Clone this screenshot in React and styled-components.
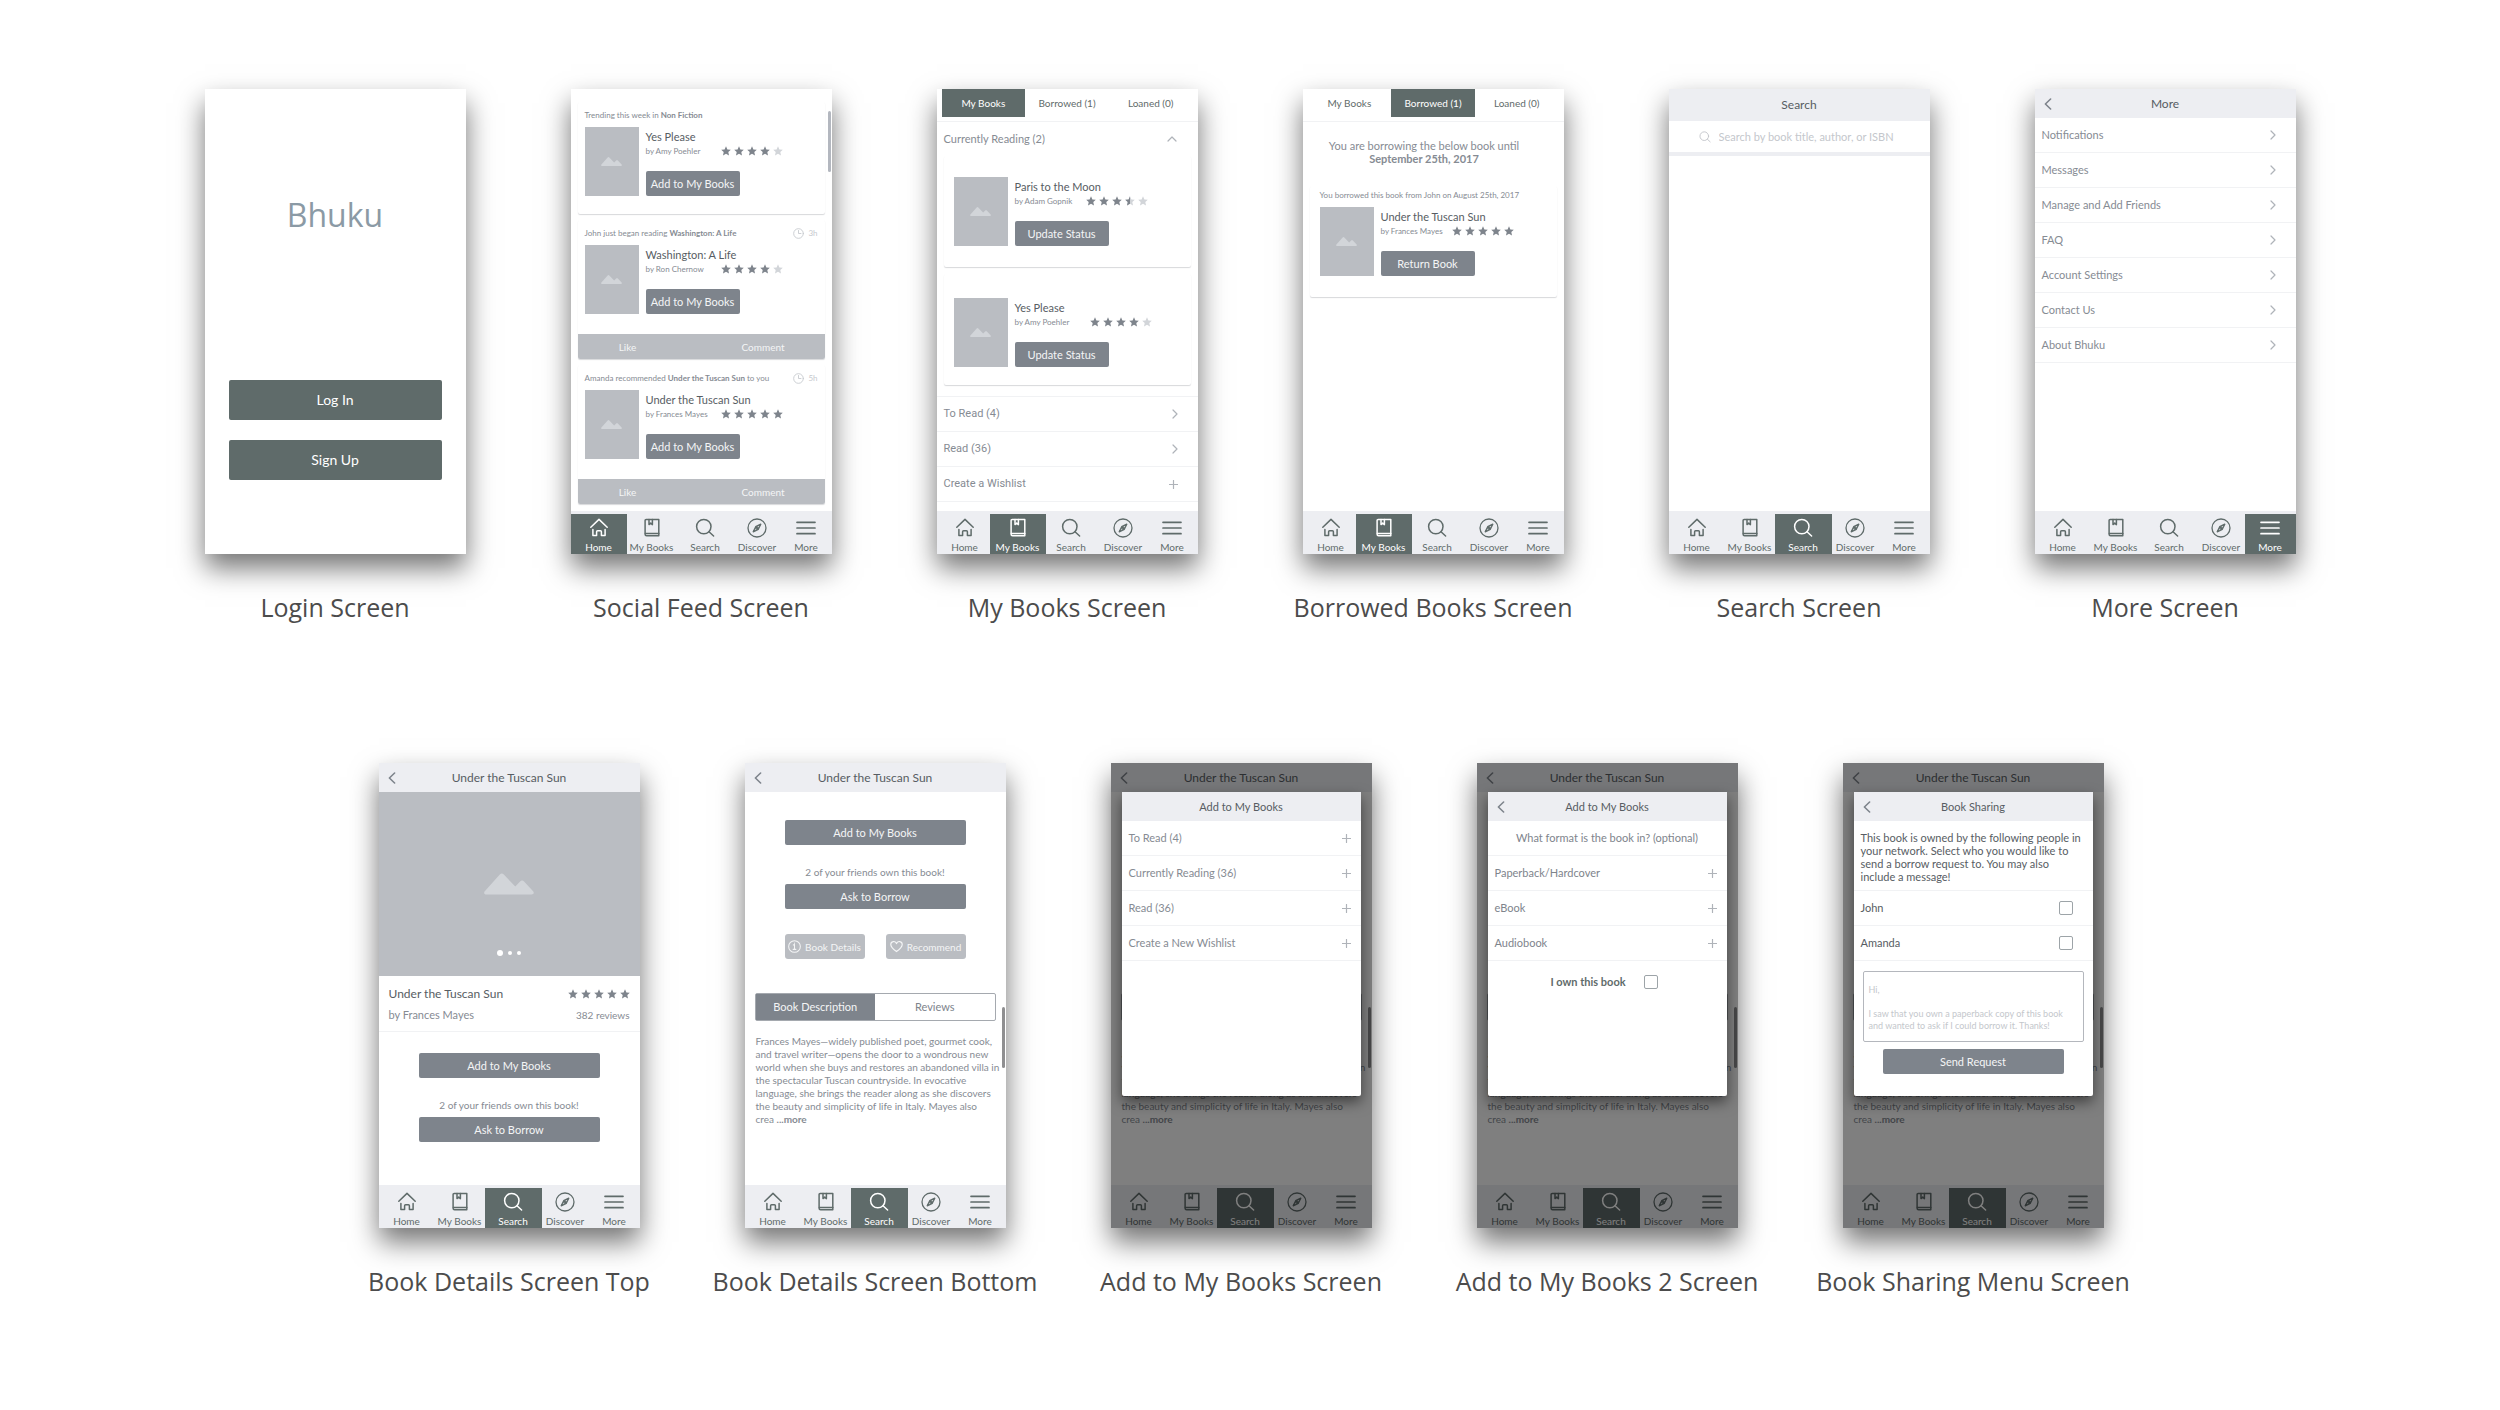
import React from "react";
import styled, { createGlobalStyle, css } from "styled-components";

const colors = {
   dark: "#5f6b6a",
   slate: "#7e848c",
   silver: "#babdc2",
   pale: "#d2d5d9",
   bar: "#edeef2",
   line: "#f1f2f4",
   title: "#575d63",
   text: "#868b93"
};

const GlobalStyle = createGlobalStyle`
   *, *::before, *::after {
      box-sizing: border-box;
   }

   body {
      margin: 0;
      background: #fff;
      font-family: Lato, "Open Sans", sans-serif;
      font-size: 11px;
      line-height: 14px;
      color: ${colors.text};
   }

   button, input, textarea {
      font: inherit;
      color: inherit;
      margin: 0;
      padding: 0;
      border: 0;
      background: none;
   }

   button {
      cursor: pointer;
   }

   h1, h2, h3, p, figure, ul {
      margin: 0;
      padding: 0;
      font-weight: 400;
   }

   svg {
      display: block;
      flex: none;
   }
`;

/* ---------- Board ---------- */

const Board = styled.main`
   display: flex;
   flex-direction: column;
   gap: 140px;
   padding: 89px 40px 112px;
`;

const BoardRow = styled.section`
   display: flex;
   flex-wrap: wrap;
   justify-content: center;
   gap: 60px 105px;
   padding-right: ${({ $indent }) => ($indent ? "18px" : "0")};
`;

const Frame = styled.figure`
   display: flex;
   flex-direction: column;
   align-items: center;
   gap: 37px;
   width: 261px;
`;

const Caption = styled.figcaption`
   font-family: "Open Sans", sans-serif;
   font-size: 25px;
   line-height: 32px;
   color: #4c4c4c;
   white-space: nowrap;
`;

const Phone = styled.div`
   position: relative;
   display: flex;
   flex-direction: column;
   width: 100%;
   min-height: 465px;
   background: #fff;
   box-shadow: 0 14px 26px rgba(0, 0, 0, 0.55);
`;

const Content = styled.div`
   display: flex;
   flex-direction: column;
   flex: 1;
`;

const ScrollThumb = styled.div`
   position: absolute;
   top: ${({ $low }) => ($low ? "244px" : "22px")};
   right: 1px;
   width: 3px;
   height: 61px;
   border-radius: 2px;
   background: ${({ $low }) => ($low ? "#8f8f91" : "#b3b7bf")};
`;

/* ---------- Icons ---------- */

const Stroke = ({ size = 20, width = size, height = size, weight = 1.5, viewBox = "0 0 20 20", children }) => (
   <svg
      width={width}
      height={height}
      viewBox={viewBox}
      fill="none"
      stroke="currentColor"
      strokeWidth={weight}
      strokeLinecap="round"
      strokeLinejoin="round"
      aria-hidden="true"
   >
      {children}
   </svg>
);

const HomeIcon = () => (
   <Stroke>
      <path d="M1.8 9.2 10 1.4l8.2 7.8" />
      <path d="M3.9 11.6v6h3.7v-3.8a1 1 0 0 1 1-1h2.8a1 1 0 0 1 1 1v3.8h3.7v-6" />
   </Stroke>
);

const BookIcon = () => (
   <Stroke>
      <path d="M4.2 1.4h12.6v16.4H4.6a1.5 1.5 0 0 1-1.5-1.5V2.5a1.1 1.1 0 0 1 1.1-1.1z" />
      <path d="M3.4 15.4h13.4M7 1.6v5l1.7-1.5 1.7 1.5v-5" />
   </Stroke>
);

const SearchIcon = ({ size = 20, weight }) => (
   <Stroke size={size} weight={weight}>
      <circle cx="8.8" cy="8.6" r="7.2" />
      <path d="m14 13.8 4.6 4.2" />
   </Stroke>
);

const DiscoverIcon = () => (
   <Stroke weight={1.3}>
      <circle cx="10" cy="10" r="9" />
      <path d="M13.8 6.2 11.3 11.3 6.2 13.8l2.5-5.1zM8.7 8.7l2.6 2.6" />
      <circle cx="10" cy="10" r="1.2" />
   </Stroke>
);

const MenuIcon = () => (
   <Stroke weight={1.7}>
      <path d="M1 4.3h18M1 10h18M1 15.7h18" />
   </Stroke>
);

const BackIcon = () => (
   <Stroke width={8} height={12} viewBox="0 0 8 12" weight={1.6}>
      <path d="M6.6 1 1.4 6l5.2 5" />
   </Stroke>
);

const RowIcons = {
   chevron: (
      <Stroke width={6} height={10} viewBox="0 0 6 10" weight={1.2}>
         <path d="m1 1 4 4-4 4" />
      </Stroke>
   ),
   up: (
      <Stroke width={10} height={6} viewBox="0 0 10 6" weight={1.2}>
         <path d="m1 5 4-4 4 4" />
      </Stroke>
   ),
   plus: (
      <Stroke width={9} height={9} viewBox="0 0 9 9" weight={1.2}>
         <path d="M4.5.5v8M.5 4.5h8" />
      </Stroke>
   )
};

const ClockIcon = () => (
   <Stroke size={11} weight={1.6}>
      <circle cx="10" cy="10" r="8.8" />
      <path d="M10 4.5V10h4.5" />
   </Stroke>
);

const InfoIcon = () => (
   <Stroke size={13} weight={1.6}>
      <circle cx="10" cy="10" r="9" />
      <path d="M8.2 7.8 10 7v7.2M7.8 14.4h4.4M10 4.8v.2" />
   </Stroke>
);

const HeartIcon = () => (
   <Stroke size={13} weight={1.8}>
      <path d="M10 17.8C4.4 13.6 1.2 10.6 1.2 6.9a4.5 4.5 0 0 1 8.8-1.4 4.5 4.5 0 0 1 8.8 1.4c0 3.7-3.2 6.7-8.8 10.9z" />
   </Stroke>
);

const Mountains = ({ width = 21, height = 9 }) => (
   <svg width={width} height={height} viewBox="0 0 50 21" fill={colors.pale} aria-hidden="true">
      <path d="M2.5 21C0 21-.6 18.8 1 17.4L15.8 1q2-1.9 4 0l11.5 12 4.8-5q2-1.8 4 0l9 9.8c1.4 1.5.4 3.2-1.6 3.2z" />
   </svg>
);

/* ---------- Rating ---------- */

const Stars = styled.div`
   display: flex;
   gap: 3px;
`;

const STAR = "M5 .3l1.4 3.1 3.4.4-2.5 2.3.7 3.4L5 7.8 2 9.5l.7-3.4L.2 3.8l3.4-.4z";
const HALF_STAR = "M5 .3v7.5L2 9.5l.7-3.4L.2 3.8l3.4-.4z";

const Rating = ({ value }) => (
   <Stars role="img" aria-label={`${value} out of 5 stars`}>
      {[1, 2, 3, 4, 5].map(n => (
         <svg key={n} width="10" height="10" viewBox="0 0 10 10">
            <path d={STAR} fill={value >= n ? colors.slate : colors.pale} />
            {value > n - 1 && value < n && <path d={HALF_STAR} fill={colors.slate} />}
         </svg>
      ))}
   </Stars>
);

/* ---------- Bottom navigation ---------- */

const NavBar = styled.nav`
   display: grid;
   grid-template-columns: 56fr 50fr 57fr 47fr 51fr;
   padding-top: 3px;
   background: ${colors.bar};
`;

const NavButton = styled.button`
   display: flex;
   flex-direction: column;
   align-items: center;
   gap: 3px;
   height: 40px;
   margin: 0 ${({ $wide }) => ($wide ? "-3px" : "0")};
   padding-top: 4px;
   font-size: 10px;
   line-height: 12px;
   white-space: nowrap;
   color: ${({ $active }) => ($active ? "#fff" : colors.dark)};
   background: ${({ $active }) => ($active ? colors.dark : "transparent")};
`;

const navItems = [
   { label: "Home", Icon: HomeIcon },
   { label: "My Books", Icon: BookIcon, wide: true },
   { label: "Search", Icon: SearchIcon },
   { label: "Discover", Icon: DiscoverIcon },
   { label: "More", Icon: MenuIcon }
];

const BottomNav = ({ active }) => (
   <NavBar>
      {navItems.map(({ label, Icon, wide }) => (
         <NavButton key={label} type="button" $active={label === active} $wide={wide}>
            <Icon />
            {label}
         </NavButton>
      ))}
   </NavBar>
);

/* ---------- Header ---------- */

const HeaderBar = styled.header`
   display: grid;
   grid-template-columns: 26px 1fr 26px;
   align-items: center;
   justify-items: center;
   height: ${({ $tall }) => ($tall ? "32px" : "29px")};
   background: ${colors.bar};
   color: ${colors.title};

   button {
      color: ${colors.slate};
   }

   h2 {
      grid-column: 2;
      font-size: ${({ $small }) => ($small ? "11px" : "12px")};
   }
`;

const Header = ({ title, back, small, tall }) => (
   <HeaderBar $small={small} $tall={tall}>
      {back && (
         <button type="button" aria-label="Back">
            <BackIcon />
         </button>
      )}
      <h2>{title}</h2>
   </HeaderBar>
);

/* ---------- Tabs ---------- */

const TabBar = styled.div`
   display: flex;
   height: 33px;
   padding: 0 5px 4px;
   border-bottom: 1px solid ${colors.line};
`;

const Tab = styled.button`
   flex: 1;
   font-size: 10px;
   color: ${({ $active }) => ($active ? "#fff" : colors.dark)};
   background: ${({ $active }) => ($active ? colors.dark : "transparent")};
`;

const BookTabs = ({ active }) => (
   <TabBar>
      {["My Books", "Borrowed (1)", "Loaned (0)"].map(label => (
         <Tab key={label} type="button" $active={label === active}>
            {label}
         </Tab>
      ))}
   </TabBar>
);

/* ---------- List rows ---------- */

const List = styled.ul`
   list-style: none;
   margin-top: ${({ $spaced }) => ($spaced ? "11px" : "0")};
   border-top: ${({ $spaced }) => ($spaced ? `1px solid ${colors.line}` : "0")};
`;

const rowBase = css`
   display: flex;
   align-items: center;
   justify-content: space-between;
   width: 100%;
   height: 35px;
   padding: 0 ${({ $inset }) => $inset || "20px"} 0 7px;
   border-bottom: 1px solid ${colors.line};
   text-align: left;
`;

const RowButton = styled.button`
   ${rowBase}
   font-family: ${({ $roboto }) => ($roboto ? "Roboto, sans-serif" : "inherit")};
   color: ${({ $dark }) => ($dark ? colors.slate : colors.text)};

   svg {
      color: #afb3b9;
   }
`;

const RowLabel = styled.label`
   ${rowBase}
   color: ${colors.title};
`;

const Rows = ({ items, icon = "chevron", inset, ...rest }) => (
   <List {...rest}>
      {items.map(item => {
         const row = typeof item === "string" ? { label: item } : item;
         return (
            <li key={row.label}>
               <RowButton type="button" $inset={inset} $dark={row.dark} $roboto={row.roboto}>
                  {row.label}
                  {RowIcons[row.icon || icon]}
               </RowButton>
            </li>
         );
      })}
   </List>
);

/* ---------- Book cards ---------- */

const Button = styled.button`
   height: 25px;
   border-radius: 2px;
   background: ${colors.slate};
   color: #f4f5f6;
`;

const CardButton = styled(Button)`
   width: 94px;
   margin-top: auto;
`;

const Card = styled.article`
   margin: 0 7px;
   padding: ${({ $padding }) => $padding || "0"};
   border-radius: 2px;
   box-shadow: 0 1px 1px rgba(60, 66, 74, 0.2);
`;

const Cover = styled.div`
   display: flex;
   align-items: center;
   justify-content: center;
   width: 54px;
   height: 69px;
   background: ${colors.silver};
`;

const BookRow = styled.div`
   display: flex;
   gap: 7px;
`;

const BookInfo = styled.div`
   display: flex;
   flex-direction: column;
   padding-top: 3px;

   h3 {
      font-size: 11px;
      color: ${colors.title};
   }
`;

const Byline = styled.div`
   display: flex;
   align-items: center;
   font-size: 8px;

   span {
      width: ${({ $wide }) => ($wide ? "75px" : "71px")};
      white-space: nowrap;
   }
`;

const Book = ({ title, author, rating, action, wide }) => (
   <BookRow>
      <Cover>
         <Mountains />
      </Cover>
      <BookInfo>
         <h3>{title}</h3>
         <Byline $wide={wide}>
            <span>by {author}</span>
            <Rating value={rating} />
         </Byline>
         <CardButton type="button">{action}</CardButton>
      </BookInfo>
   </BookRow>
);

const FeedHeading = styled.div`
   display: flex;
   align-items: center;
   justify-content: space-between;
   margin-bottom: 6px;
   font-size: 8px;
   line-height: 12px;
   white-space: nowrap;
`;

const FeedTime = styled.span`
   display: flex;
   align-items: center;
   gap: 4px;
   color: #c6c9ce;
`;

const FeedBody = styled.div`
   padding: 7px 7px 0;
`;

const FeedActions = styled.div`
   display: grid;
   grid-template-columns: 100px 1fr;
   height: 25px;
   margin-top: 20px;
   border-radius: 0 0 2px 2px;
   background: ${colors.silver};
   color: #f4f5f6;

   button {
      font-size: 10px;
   }

   button:last-child {
      padding-left: 24px;
   }
`;

const Feed = styled.div`
   display: flex;
   flex-direction: column;
   gap: 6px;
   padding: 13px 0 6px;
`;

const feed = [
   {
      text: <>Trending this week in <b>Non Fiction</b></>,
      title: "Yes Please",
      author: "Amy Poehler",
      rating: 4
   },
   {
      text: <>John just began reading <b>Washington: A Life</b></>,
      title: "Washington: A Life",
      author: "Ron Chernow",
      rating: 4,
      time: "3h"
   },
   {
      text: <>Amanda recommended <b>Under the Tuscan Sun</b> to you</>,
      title: "Under the Tuscan Sun",
      author: "Frances Mayes",
      rating: 5,
      time: "5h"
   }
];

/* ---------- Login ---------- */

const LoginContent = styled(Content)`
   align-items: center;
   gap: 20px;
   padding: 103px 24px 74px;

   h1 {
      margin-bottom: auto;
      font-family: "Open Sans", sans-serif;
      font-size: 32px;
      line-height: 46px;
      color: #8b9aa5;
   }
`;

const LoginButton = styled.button`
   width: 100%;
   height: 40px;
   border-radius: 2px;
   background: ${colors.dark};
   color: #fff;
   font-size: 14px;
`;

const LoginScreen = () => (
   <LoginContent>
      <h1>Bhuku</h1>
      <LoginButton type="button">Log In</LoginButton>
      <LoginButton type="button">Sign Up</LoginButton>
   </LoginContent>
);

/* ---------- Main screens ---------- */

const FeedScreen = () => (
   <>
      <Content>
         <Feed>
            {feed.map(({ text, time, ...book }) => (
               <Card key={book.title} $padding={time ? "0" : "0 0 18px"}>
                  <FeedBody>
                     <FeedHeading>
                        <span>{text}</span>
                        {time && (
                           <FeedTime>
                              <ClockIcon />
                              {time}
                           </FeedTime>
                        )}
                     </FeedHeading>
                     <Book {...book} action="Add to My Books" wide />
                  </FeedBody>
                  {time && (
                     <FeedActions>
                        <button type="button">Like</button>
                        <button type="button">Comment</button>
                     </FeedActions>
                  )}
               </Card>
            ))}
         </Feed>
      </Content>
      <ScrollThumb />
      <BottomNav active="Home" />
   </>
);

const Shelf = styled.div`
   display: flex;
   flex-direction: column;
   gap: 7px;

   > button {
      height: 34px;
      border-bottom: 0;
      margin-bottom: -7px;
   }
`;

const MyBooksScreen = () => (
   <>
      <Content>
         <BookTabs active="My Books" />
         <Shelf>
            <RowButton type="button" $inset="21px">
               Currently Reading (2)
               {RowIcons.up}
            </RowButton>
            <Card $padding="21px 10px">
               <Book title="Paris to the Moon" author="Adam Gopnik" rating={3.5} action="Update Status" />
            </Card>
            <Card $padding="24px 10px 18px">
               <Book title="Yes Please" author="Amy Poehler" rating={4} action="Update Status" wide />
            </Card>
         </Shelf>
         <Rows
            $spaced
            items={[
               { label: "To Read (4)", roboto: true },
               { label: "Read (36)", roboto: true },
               { label: "Create a Wishlist", roboto: true, icon: "plus" }
            ]}
         />
      </Content>
      <BottomNav active="My Books" />
   </>
);

const BorrowNotice = styled.p`
   padding: 17px 18px 21px 0;
   line-height: 13px;
   text-align: center;
`;

const BorrowedScreen = () => (
   <>
      <Content>
         <BookTabs active="Borrowed (1)" />
         <BorrowNotice>
            You are borrowing the below book until
            <br />
            <b>September 25th, 2017</b>
         </BorrowNotice>
         <Card $padding="3px 10px 21px">
            <FeedHeading>You borrowed this book from John on August 25th, 2017</FeedHeading>
            <Book title="Under the Tuscan Sun" author="Frances Mayes" rating={5} action="Return Book" />
         </Card>
      </Content>
      <BottomNav active="My Books" />
   </>
);

const SearchForm = styled.form`
   display: flex;
   align-items: center;
   gap: 8px;
   height: 35px;
   padding-left: 30px;
   border-bottom: 4px solid ${colors.bar};
   color: #c4c7cc;

   input {
      flex: 1;
      min-width: 0;
      outline: none;
   }

   input::placeholder {
      color: #c4c7cc;
      opacity: 1;
   }
`;

const SearchScreen = () => (
   <>
      <Content>
         <Header title="Search" tall />
         <SearchForm>
            <SearchIcon size={12} weight={1.6} />
            <input
               type="text"
               aria-label="Search books"
               placeholder="Search by book title, author, or ISBN"
            />
         </SearchForm>
      </Content>
      <BottomNav active="Search" />
   </>
);

const MoreScreen = () => (
   <>
      <Content>
         <Header title="More" back />
         <Rows
            items={[
               "Notifications",
               "Messages",
               "Manage and Add Friends",
               "FAQ",
               "Account Settings",
               "Contact Us",
               "About Bhuku"
            ]}
         />
      </Content>
      <BottomNav active="More" />
   </>
);

/* ---------- Book details ---------- */

const Hero = styled.div`
   display: flex;
   flex-direction: column;
   align-items: center;
   justify-content: flex-end;
   gap: 55px;
   height: 184px;
   padding-bottom: 20px;
   background: ${colors.silver};
`;

const Dots = styled.div`
   display: flex;
   align-items: center;
   gap: 5px;
`;

const Dot = styled.span`
   width: ${({ $current }) => ($current ? "6px" : "4px")};
   height: ${({ $current }) => ($current ? "6px" : "4px")};
   border-radius: 50%;
   background: #fff;
`;

const Summary = styled.div`
   display: grid;
   grid-template-columns: 1fr auto;
   align-items: center;
   justify-items: start;
   gap: 7px;
   padding: 11px 10px 9px;
   border-bottom: 1px solid ${colors.line};

   h3 {
      font-size: 12px;
      color: ${colors.title};
   }

   small {
      justify-self: end;
      font-size: 10px;
   }
`;

const Actions = styled.div`
   display: flex;
   flex-direction: column;
   padding: ${({ $top }) => $top} 40px 0;

   p {
      margin: 20px 0 5px;
      font-size: 10px;
      text-align: center;
   }
`;

const BookActions = ({ top }) => (
   <Actions $top={top}>
      <Button type="button">Add to My Books</Button>
      <p>2 of your friends own this book!</p>
      <Button type="button">Ask to Borrow</Button>
   </Actions>
);

const MinorActions = styled.div`
   display: flex;
   justify-content: space-between;
   padding: 25px 40px 34px;
`;

const MinorButton = styled.button`
   display: flex;
   align-items: center;
   justify-content: center;
   gap: 4px;
   width: 80px;
   height: 25px;
   border-radius: 3px;
   background: ${colors.silver};
   color: #f4f5f6;
   font-size: 10px;
`;

const Segments = styled.div`
   display: flex;
   height: 28px;
   margin: 0 10px;
   border: 1px solid #a5a9af;
   border-radius: 2px;
`;

const Segment = styled.button`
   flex: 1;
   color: ${({ $active }) => ($active ? "#f4f5f6" : colors.slate)};
   background: ${({ $active }) => ($active ? colors.slate : "transparent")};
`;

const Description = styled.p`
   padding: 14px 6px 0 11px;
   font-size: 10px;
   line-height: 13px;
`;

const DetailsTopScreen = () => (
   <>
      <Content>
         <Header title="Under the Tuscan Sun" back />
         <Hero>
            <Mountains width={50} height={22} />
            <Dots>
               <Dot $current />
               <Dot />
               <Dot />
            </Dots>
         </Hero>
         <Summary>
            <h3>Under the Tuscan Sun</h3>
            <Rating value={5} />
            <span>by Frances Mayes</span>
            <small>382 reviews</small>
         </Summary>
         <BookActions top="21px" />
      </Content>
      <BottomNav active="Search" />
   </>
);

const DetailsBottomScreen = () => (
   <>
      <Content>
         <Header title="Under the Tuscan Sun" back />
         <BookActions top="28px" />
         <MinorActions>
            <MinorButton type="button">
               <InfoIcon />
               Book Details
            </MinorButton>
            <MinorButton type="button">
               <HeartIcon />
               Recommend
            </MinorButton>
         </MinorActions>
         <Segments>
            <Segment type="button" $active>
               Book Description
            </Segment>
            <Segment type="button">Reviews</Segment>
         </Segments>
         <Description>
            Frances Mayes—widely published poet, gourmet cook, and travel writer—opens the door to a
            wondrous new world when she buys and restores an abandoned villa in the spectacular Tuscan
            countryside. In evocative language, she brings the reader along as she discovers the
            beauty and simplicity of life in Italy. Mayes also
            <br />
            crea <b>...more</b>
         </Description>
      </Content>
      <ScrollThumb $low />
      <BottomNav active="Search" />
   </>
);

/* ---------- Modals ---------- */

const Overlay = styled.div`
   position: absolute;
   inset: 0;
   padding: 29px 11px 0;
   background: rgba(0, 0, 0, 0.5);
`;

const Dialog = styled.div`
   min-height: 304px;
   border-radius: 0 0 2px 2px;
   background: #fff;
   box-shadow: 0 6px 14px rgba(0, 0, 0, 0.5);
   overflow: hidden;
`;

const Checkbox = styled.input`
   appearance: none;
   width: 14px;
   height: 14px;
   border: 1px solid #9da4a8;
   border-radius: 2px;
   background: #fff;

   &:checked {
      background: ${colors.slate};
   }
`;

const Question = styled.p`
   height: 35px;
   border-bottom: 1px solid ${colors.line};
   line-height: 34px;
   text-align: center;
   color: ${colors.slate};
`;

const OwnLabel = styled.label`
   display: flex;
   align-items: center;
   justify-content: center;
   gap: 18px;
   padding: 14px 6px 0 0;
   font-weight: 700;
   color: ${colors.dark};
`;

const Intro = styled.p`
   height: 70px;
   padding: 10px 7px 0;
   border-bottom: 1px solid ${colors.line};
   line-height: 13px;
   color: ${colors.title};
`;

const RequestForm = styled.form`
   display: flex;
   flex-direction: column;
   gap: 7px;
   padding: 10px 9px 0;

   textarea {
      height: 71px;
      padding: 12px 0 0 5px;
      border: 1px solid #b4b7bd;
      border-radius: 2px;
      font-size: 9px;
      line-height: 12px;
      color: #c4c7cc;
      resize: none;
      overflow: hidden;
   }

   button {
      margin: 0 20px;
   }
`;

const ModalScreen = ({ title, back, children }) => (
   <>
      <DetailsBottomScreen />
      <Overlay>
         <Dialog role="dialog" aria-label={title}>
            <Header title={title} back={back} small />
            {children}
         </Dialog>
      </Overlay>
   </>
);

const AddModalScreen = () => (
   <ModalScreen title="Add to My Books">
      <Rows
         icon="plus"
         inset="10px"
         items={["To Read (4)", "Currently Reading (36)", "Read (36)", "Create a New Wishlist"]}
      />
   </ModalScreen>
);

const FormatModalScreen = () => (
   <ModalScreen title="Add to My Books" back>
      <Question>What format is the book in? (optional)</Question>
      <Rows
         icon="plus"
         inset="10px"
         items={[
            { label: "Paperback/Hardcover", dark: true },
            { label: "eBook", dark: true },
            { label: "Audiobook", dark: true }
         ]}
      />
      <OwnLabel>
         I own this book
         <Checkbox type="checkbox" />
      </OwnLabel>
   </ModalScreen>
);

const SharingModalScreen = () => (
   <ModalScreen title="Book Sharing" back>
      <Intro>
         This book is owned by the following people in your network. Select who you would like to
         send a borrow request to. You may also include a message!
      </Intro>
      {["John", "Amanda"].map(name => (
         <RowLabel key={name}>
            {name}
            <Checkbox type="checkbox" />
         </RowLabel>
      ))}
      <RequestForm>
         <textarea
            aria-label="Message"
            defaultValue={
               "Hi,\n\nI saw that you own a paperback copy of this book\nand wanted to ask if I could borrow it. Thanks!"
            }
         />
         <Button type="button">Send Request</Button>
      </RequestForm>
   </ModalScreen>
);

const rows = [
   [
      { caption: "Login Screen", Screen: LoginScreen },
      { caption: "Social Feed Screen", Screen: FeedScreen },
      { caption: "My Books Screen", Screen: MyBooksScreen },
      { caption: "Borrowed Books Screen", Screen: BorrowedScreen },
      { caption: "Search Screen", Screen: SearchScreen },
      { caption: "More Screen", Screen: MoreScreen }
   ],
   [
      { caption: "Book Details Screen Top", Screen: DetailsTopScreen },
      { caption: "Book Details Screen Bottom", Screen: DetailsBottomScreen },
      { caption: "Add to My Books Screen", Screen: AddModalScreen },
      { caption: "Add to My Books 2 Screen", Screen: FormatModalScreen },
      { caption: "Book Sharing Menu Screen", Screen: SharingModalScreen }
   ]
];

const App = () => (
   <>
      <GlobalStyle />
      <Board>
         {rows.map((screens, i) => (
            <BoardRow key={i} $indent={i === 1}>
               {screens.map(({ caption, Screen }) => (
                  <Frame key={caption}>
                     <Phone>
                        <Screen />
                     </Phone>
                     <Caption>{caption}</Caption>
                  </Frame>
               ))}
            </BoardRow>
         ))}
      </Board>
   </>
);

export default App;
